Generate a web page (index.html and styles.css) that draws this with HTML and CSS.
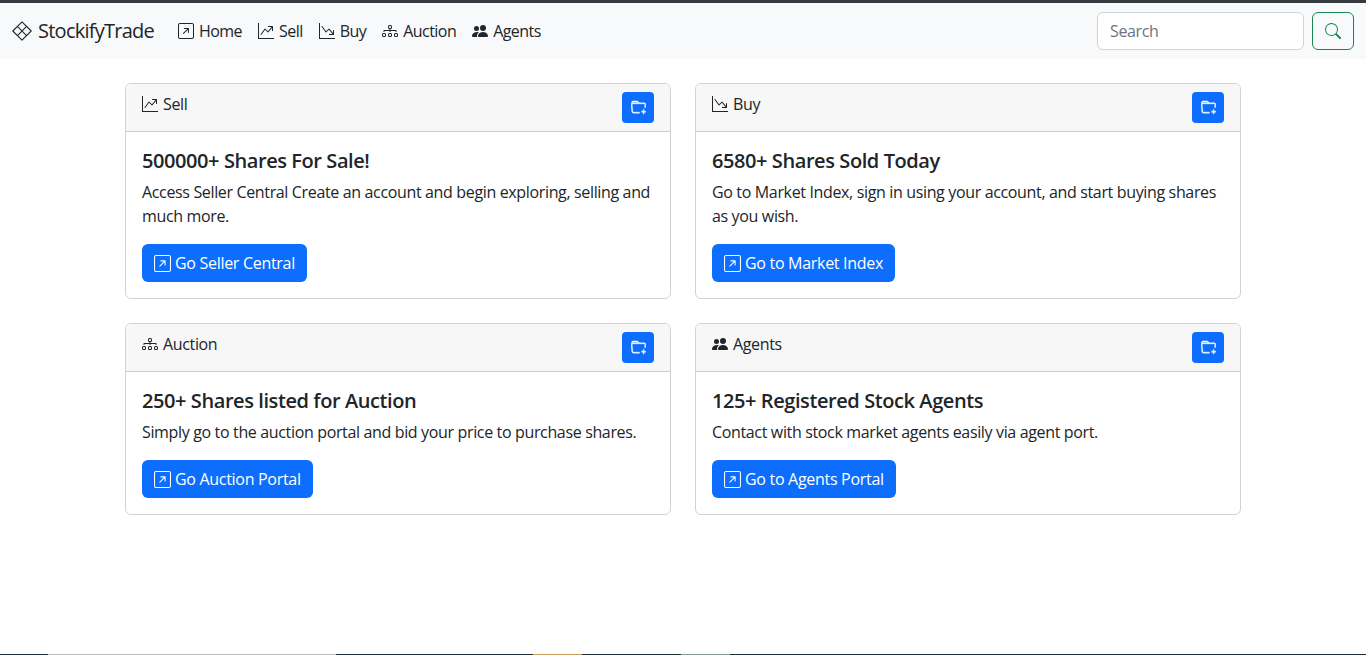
FILE: index.html
```html
<!DOCTYPE html>
<html lang="en">
<head>
  <meta charset="UTF-8">
  <title>StockifyTrade</title>
  <link rel="stylesheet" href="styles.css">
</head>
<body>

<svg class="sprite" xmlns="http://www.w3.org/2000/svg">
  <symbol id="i-open" viewBox="0 0 16 16"><path fill-rule="evenodd" d="M15 2a1 1 0 0 0-1-1H2a1 1 0 0 0-1 1v12a1 1 0 0 0 1 1h12a1 1 0 0 0 1-1V2zM0 2a2 2 0 0 1 2-2h12a2 2 0 0 1 2 2v12a2 2 0 0 1-2 2H2a2 2 0 0 1-2-2V2zm5.854 8.803a.5.5 0 1 1-.708-.707L9.243 6H6.475a.5.5 0 1 1 0-1h3.975a.5.5 0 0 1 .5.5v3.975a.5.5 0 1 1-1 0V6.707l-4.096 4.096z"/></symbol>
  <symbol id="i-up" viewBox="0 0 16 16"><path fill-rule="evenodd" d="M0 0h1v15h15v1H0V0Zm10 3.5a.5.5 0 0 1 .5-.5h4a.5.5 0 0 1 .5.5v4a.5.5 0 0 1-1 0V4.9l-3.613 4.417a.5.5 0 0 1-.74.037L7.06 6.767l-3.656 5.027a.5.5 0 0 1-.808-.588l4-5.5a.5.5 0 0 1 .758-.06l2.609 2.61L13.445 4H10.5a.5.5 0 0 1-.5-.5Z"/></symbol>
  <symbol id="i-down" viewBox="0 0 16 16"><path fill-rule="evenodd" d="M0 0h1v15h15v1H0V0Zm10 11.5a.5.5 0 0 0 .5.5h4a.5.5 0 0 0 .5-.5v-4a.5.5 0 0 0-1 0v2.6l-3.613-4.417a.5.5 0 0 0-.74-.037L7.06 8.233 3.404 3.206a.5.5 0 0 0-.808.588l4 5.5a.5.5 0 0 0 .758.06l2.609-2.61L13.445 11H10.5a.5.5 0 0 0-.5-.5Z"/></symbol>
  <symbol id="i-tree" viewBox="0 0 16 16"><path fill-rule="evenodd" d="M6 3.5A1.5 1.5 0 0 1 7.5 2h1A1.5 1.5 0 0 1 10 3.5v1A1.5 1.5 0 0 1 8.5 6v1H14a.5.5 0 0 1 .5.5v1a.5.5 0 0 1-1 0V8h-5v.5a.5.5 0 0 1-1 0V8h-5v.5a.5.5 0 0 1-1 0v-1A.5.5 0 0 1 2 7h5.5V6A1.5 1.5 0 0 1 6 4.5v-1zM8.5 5a.5.5 0 0 0 .5-.5v-1a.5.5 0 0 0-.5-.5h-1a.5.5 0 0 0-.5.5v1a.5.5 0 0 0 .5.5h1zM0 11.5A1.5 1.5 0 0 1 1.5 10h1A1.5 1.5 0 0 1 4 11.5v1A1.5 1.5 0 0 1 2.5 14h-1A1.5 1.5 0 0 1 0 12.5v-1zm1.5-.5a.5.5 0 0 0-.5.5v1a.5.5 0 0 0 .5.5h1a.5.5 0 0 0 .5-.5v-1a.5.5 0 0 0-.5-.5h-1zm4.5.5A1.5 1.5 0 0 1 7.5 10h1a1.5 1.5 0 0 1 1.5 1.5v1A1.5 1.5 0 0 1 8.5 14h-1A1.5 1.5 0 0 1 6 12.5v-1zm1.5-.5a.5.5 0 0 0-.5.5v1a.5.5 0 0 0 .5.5h1a.5.5 0 0 0 .5-.5v-1a.5.5 0 0 0-.5-.5h-1zm4.5.5a1.5 1.5 0 0 1 1.5-1.5h1a1.5 1.5 0 0 1 1.5 1.5v1a1.5 1.5 0 0 1-1.5 1.5h-1a1.5 1.5 0 0 1-1.5-1.5v-1zm1.5-.5a.5.5 0 0 0-.5.5v1a.5.5 0 0 0 .5.5h1a.5.5 0 0 0 .5-.5v-1a.5.5 0 0 0-.5-.5h-1z"/></symbol>
  <symbol id="i-people" viewBox="0 0 16 16"><path d="M7 14s-1 0-1-1 1-4 5-4 5 3 5 4-1 1-1 1H7Zm4-6a3 3 0 1 0 0-6 3 3 0 0 0 0 6Zm-5.784 6A2.238 2.238 0 0 1 5 13c0-1.355.68-2.75 1.936-3.72A6.325 6.325 0 0 0 5 9c-4 0-5 3-5 4s1 1 1 1h4.216ZM4.5 8a2.5 2.5 0 1 0 0-5 2.5 2.5 0 0 0 0 5Z"/></symbol>
  <symbol id="i-search" viewBox="0 0 16 16"><path d="M11.742 10.344a6.5 6.5 0 1 0-1.397 1.398h-.001c.03.04.062.078.098.115l3.85 3.85a1 1 0 0 0 1.415-1.414l-3.85-3.85a1.007 1.007 0 0 0-.115-.1zM12 6.5a5.5 5.5 0 1 1-11 0 5.5 5.5 0 0 1 11 0z"/></symbol>
  <symbol id="i-folder" viewBox="0 0 16 16"><path d="m.5 3 .04.87a1.99 1.99 0 0 0-.342 1.311l.637 7A2 2 0 0 0 2.826 14H9v-1H2.826a1 1 0 0 1-.995-.91l-.637-7A1 1 0 0 1 2.19 4h11.62a1 1 0 0 1 .996 1.09L14.54 8h1.005l.256-2.819A2 2 0 0 0 13.81 3H9.828a2 2 0 0 1-1.414-.586l-.828-.828A2 2 0 0 0 6.172 1H2.5a2 2 0 0 0-2 2zm5.672-1a1 1 0 0 1 .707.293L7.586 3H2.19c-.24 0-.47.042-.683.12L1.5 2.98a1 1 0 0 1 1-.98h3.672z"/><path d="M13.5 10a.5.5 0 0 1 .5.5V12h1.5a.5.5 0 1 1 0 1H14v1.5a.5.5 0 1 1-1 0V13h-1.5a.5.5 0 0 1 0-1H13v-1.5a.5.5 0 0 1 .5-.5z"/></symbol>
  <symbol id="i-logo" viewBox="0 0 20 20"><g fill="none" stroke="currentColor" stroke-width="1.1" stroke-linejoin="round"><path d="M10 .8 19.2 10 10 19.2.8 10Z"/><path d="M5.4 5.4 14.6 14.6M14.6 5.4 5.4 14.6"/></g></symbol>
</svg>

<nav class="navbar">
  <a class="brand" href="#"><svg class="logo"><use href="#i-logo"/></svg>StockifyTrade</a>
  <ul class="nav-links">
    <li><a href="#"><svg class="icon"><use href="#i-open"/></svg>Home</a></li>
    <li><a href="#"><svg class="icon"><use href="#i-up"/></svg>Sell</a></li>
    <li><a href="#"><svg class="icon"><use href="#i-down"/></svg>Buy</a></li>
    <li><a href="#"><svg class="icon"><use href="#i-tree"/></svg>Auction</a></li>
    <li><a href="#"><svg class="icon"><use href="#i-people"/></svg>Agents</a></li>
  </ul>
  <form class="search">
    <input class="search-input" placeholder="Search">
    <button class="search-btn" type="button"><svg class="icon"><use href="#i-search"/></svg></button>
  </form>
</nav>

<main class="cards">
  <section class="card">
    <div class="card-header">
      <span><svg class="icon"><use href="#i-up"/></svg>Sell</span>
      <a class="folder-btn" href="#"><svg class="icon-sm"><use href="#i-folder"/></svg></a>
    </div>
    <div class="card-body">
      <h5>500000+ Shares For Sale!</h5>
      <p>Access Seller Central Create an account and begin exploring, selling and much more.</p>
      <a class="btn" href="#"><svg class="icon"><use href="#i-open"/></svg>Go Seller Central</a>
    </div>
  </section>

  <section class="card">
    <div class="card-header">
      <span><svg class="icon"><use href="#i-down"/></svg>Buy</span>
      <a class="folder-btn" href="#"><svg class="icon-sm"><use href="#i-folder"/></svg></a>
    </div>
    <div class="card-body">
      <h5>6580+ Shares Sold Today</h5>
      <p>Go to Market Index, sign in using your account, and start buying shares as you wish.</p>
      <a class="btn" href="#"><svg class="icon"><use href="#i-open"/></svg>Go to Market Index</a>
    </div>
  </section>

  <section class="card">
    <div class="card-header">
      <span><svg class="icon"><use href="#i-tree"/></svg>Auction</span>
      <a class="folder-btn" href="#"><svg class="icon-sm"><use href="#i-folder"/></svg></a>
    </div>
    <div class="card-body">
      <h5>250+ Shares listed for Auction</h5>
      <p>Simply go to the auction portal and bid your price to purchase shares.</p>
      <a class="btn" href="#"><svg class="icon"><use href="#i-open"/></svg>Go Auction Portal</a>
    </div>
  </section>

  <section class="card">
    <div class="card-header">
      <span><svg class="icon"><use href="#i-people"/></svg>Agents</span>
      <a class="folder-btn" href="#"><svg class="icon-sm"><use href="#i-folder"/></svg></a>
    </div>
    <div class="card-body">
      <h5>125+ Registered Stock Agents</h5>
      <p>Contact with stock market agents easily via agent port.</p>
      <a class="btn" href="#"><svg class="icon"><use href="#i-open"/></svg>Go to Agents Portal</a>
    </div>
  </section>
</main>

<div class="edge">
  <span class="edge-a"></span>
  <span class="edge-b"></span>
  <span class="edge-a2"></span>
  <span class="edge-c"></span>
  <span class="edge-a3"></span>
  <span class="edge-d"></span>
  <span class="edge-a4"></span>
</div>

</body>
</html>
```

FILE: styles.css
```css
* {
  box-sizing: border-box;
}
body {
  font-family: 'Open Sans', 'Noto Sans', sans-serif;
  font-size: 16px;
  line-height: 24px;
  letter-spacing: -0.35px;
  color: #212529;
  background: #fff;
  margin: 0;
  min-height: 655px;
  display: flex;
  flex-direction: column;
  border-top: 3px solid #343a40;
}
a {
  color: inherit;
  text-decoration: none;
}
.sprite {
  display: none;
}
.icon {
  width: 16px;
  height: 16px;
  fill: currentColor;
  flex: none;
  margin-right: 5px;
  vertical-align: -2px;
}
.icon-sm {
  width: 15px;
  height: 15px;
  fill: #fff;
  stroke: #fff;
  stroke-width: 0.5;
}

.navbar {
  display: flex;
  align-items: center;
  background: #f8f9fa;
  padding: 9px 12px;
  height: 56px;
}
.brand {
  display: flex;
  align-items: center;
  font-size: 20px;
  letter-spacing: -0.75px;
  margin-right: 16px;
}
.logo {
  width: 20px;
  height: 20px;
  margin-right: 6px;
}
.nav-links {
  display: flex;
  gap: 16px;
  list-style: none;
  margin: 0 0 0 8px;
  padding: 0;
  letter-spacing: -0.55px;
}
.search {
  display: flex;
  gap: 8px;
  margin-left: auto;
}
.search-input {
  width: 207px;
  height: 38px;
  padding: 6px 12px;
  border: 1px solid #ced4da;
  border-radius: 6px;
  font: inherit;
  letter-spacing: inherit;
  background: #fff;
}
.search-input::placeholder {
  color: #6c757d;
}
.search-btn {
  width: 42px;
  height: 38px;
  display: flex;
  align-items: center;
  justify-content: center;
  border: 1px solid #198754;
  border-radius: 6px;
  background: transparent;
  color: #198754;
  padding: 0;
}
.search-btn .icon {
  margin: 0;
}

.cards {
  width: 1116px;
  margin: 24px auto 0;
  display: grid;
  grid-template-columns: 546px 546px;
  gap: 24px;
  align-items: start;
}
.card {
  border: 1px solid rgba(0,0,0,0.175);
  border-radius: 6px;
  overflow: hidden;
}
.card-header {
  display: flex;
  justify-content: space-between;
  height: 48px;
  padding: 8px 16px;
  background: #f7f7f7;
  border-bottom: 1px solid rgba(0,0,0,0.175);
}
.folder-btn {
  width: 32px;
  height: 31px;
  display: flex;
  align-items: center;
  justify-content: center;
  background: #0d6efd;
  border-radius: 4px;
}
.card-body {
  padding: 17px 16px 16px;
}
.card-body h5 {
  font-size: 20px;
  font-weight: 600;
  line-height: 24px;
  letter-spacing: -0.42px;
  margin: 0 0 7px;
}
.card-body p {
  margin: 0 0 16px;
}
.btn {
  display: inline-block;
  height: 38px;
  padding: 7px 12px;
  background: #0d6efd;
  color: #fff;
  border-radius: 6px;
  letter-spacing: -0.3px;
}
.btn .icon {
  width: 17px;
  height: 17px;
  margin-right: 4px;
  vertical-align: -3px;
}

.edge {
  display: flex;
  height: 1px;
  margin-top: auto;
}
.edge-a, .edge-a2, .edge-a3, .edge-a4 {
  background: #1f2d3a;
}
.edge-a { width: 48px; }
.edge-b { width: 288px; background: #bdbdbd; }
.edge-a2 { width: 197px; }
.edge-c { width: 49px; background: #c99a5b; }
.edge-a3 { width: 99px; }
.edge-d { width: 49px; background: #7f9f90; }
.edge-a4 { flex: 1; }
```
